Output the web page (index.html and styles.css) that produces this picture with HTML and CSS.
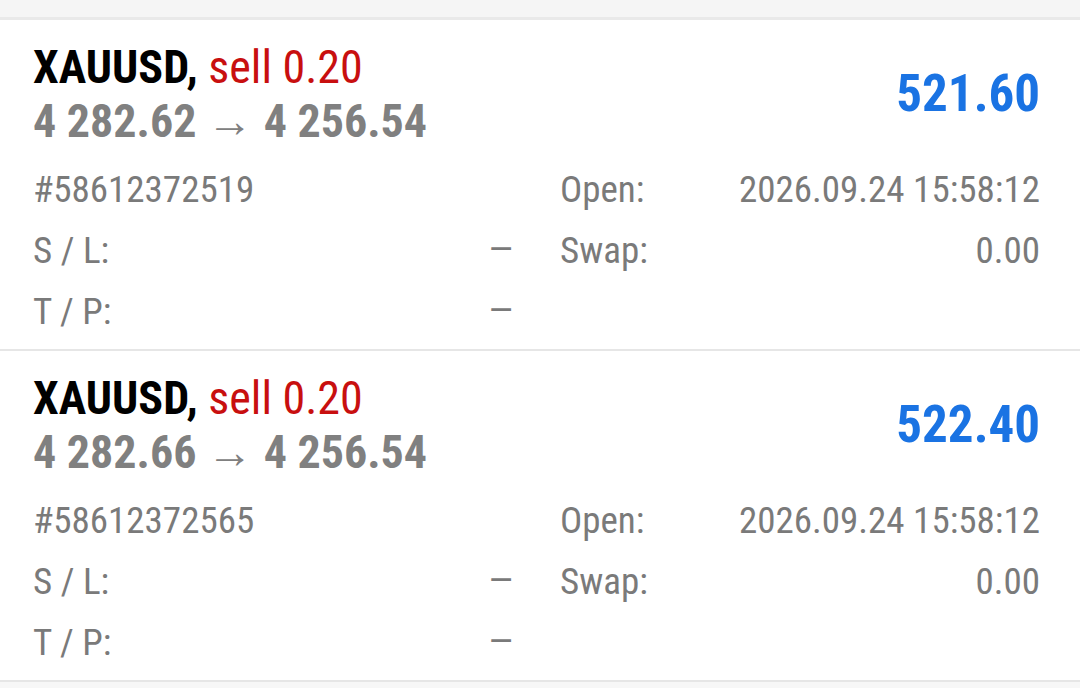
FILE: index.html
```html
<!DOCTYPE html>
<html lang="en">
<head>
  <meta charset="UTF-8" />
  <title>Trade</title>
  <link rel="stylesheet" href="styles.css">
</head>
<body>

<div class="topbar"></div>

<div id="orders"></div>

<script>
  const orders = [
    { symbol: "XAUUSD", type: "sell", volume: "0.20", open: "4 282.62", current: "4 256.54",
      profit: "521.60", ticket: "58612372519", time: "2026.09.24 15:58:12", swap: "0.00" },
    { symbol: "XAUUSD", type: "sell", volume: "0.20", open: "4 282.66", current: "4 256.54",
      profit: "522.40", ticket: "58612372565", time: "2026.09.24 15:58:12", swap: "0.00" }
  ];

  const list = document.getElementById('orders');
  orders.forEach(o => {
    const card = document.createElement('div');
    card.className = 'order';
    card.innerHTML = `
      <div class="order-head">
        <div>
          <div class="order-title"><span class="symbol">${o.symbol},</span> <span class="type">${o.type} ${o.volume}</span></div>
          <div class="order-prices">${o.open} → ${o.current}</div>
        </div>
        <div class="profit">${o.profit}</div>
      </div>
      <div class="details">
        <div class="row"><span>#${o.ticket}</span><span></span></div>
        <div class="row"><span>Open:</span><span>${o.time}</span></div>
        <div class="row"><span>S / L:</span><span class="dash">—</span></div>
        <div class="row"><span>Swap:</span><span>${o.swap}</span></div>
        <div class="row"><span>T / P:</span><span class="dash">—</span></div>
        <div class="row"></div>
      </div>
    `;
    list.appendChild(card);
  });
</script>

</body>
</html>
```

FILE: styles.css
```css
body {
  margin: 0;
  background: #f7f7f7;
  font-family: "Roboto Condensed", Roboto, "Liberation Sans", sans-serif;
  font-stretch: 75%;
}
.topbar {
  height: 17px;
  background: #f5f5f5;
  border-bottom: 3px solid #e9e9e9;
}
.order {
  background: #fff;
  padding: 20px 40px 7px 33px;
  height: 302px;
  border-bottom: 2px solid #e6e6e6;
}
.order-head {
  display: flex;
  justify-content: space-between;
  align-items: center;
}
.order-title {
  font-size: 46px;
  line-height: 54px;
  font-weight: 700;
  color: #000;
}
.order-title .type {
  font-weight: 400;
  color: #c80f0f;
}
.order-prices {
  font-size: 46px;
  line-height: 54px;
  font-weight: 700;
  color: #808080;
}
.profit {
  font-size: 51px;
  line-height: 60px;
  font-weight: 700;
  color: #1a73e3;
}
.details {
  margin-top: 11px;
  display: grid;
  grid-template-columns: 1fr 1fr;
  column-gap: 47px;
  font-size: 37px;
  line-height: 61px;
  color: #7a7a7a;
}
.row {
  display: flex;
  justify-content: space-between;
  height: 61px;
}
.dash {
  font-size: 36px;
}
```
